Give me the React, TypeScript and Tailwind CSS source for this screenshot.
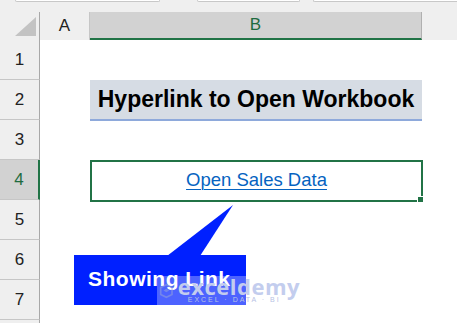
import React from "react";

const rows = [1, 2, 3, 4, 5, 6, 7, 8];

function RowHeader({ n }: { n: number }) {
  const sel = n === 4;
  return (
    <div
      className={`w-[40px] shrink-0 h-full flex items-center justify-center border-b border-[#c6c6c6] ${
        sel ? "bg-[#d2d2d2] text-[#1e6b3f] border-r-2 border-r-[#217346]" : "bg-[#efefef] text-[#222] border-r border-r-[#a8a8a8]"
      } text-[17px]`}
    >
      {n < 8 ? n : ""}
    </div>
  );
}

export default function App() {
  return (
    <div
      className="relative w-[457px] h-[323px] overflow-hidden bg-white"
      style={{ fontFamily: '"Liberation Sans", Arial, sans-serif' }}
    >
      {/* top strip */}
      <div className="h-[12px] bg-[#efefef] flex">
        <div className="ml-[15px] w-[145px] h-[2px] bg-white border-b border-x border-[#c8c8c8] rounded-b-[2px]" />
        <div className="ml-[37px] w-[103px] h-[2px] bg-white border-b border-x border-[#c8c8c8] rounded-b-[2px]" />
        <div className="ml-[13px] flex-1 h-[2px] bg-white border-b border-l border-[#c8c8c8] rounded-bl-[2px]" />
      </div>
      {/* column header */}
      <div className="h-[28px] flex bg-[#efefef]">
        <div className="w-[40px] shrink-0 h-full border-r border-[#a8a8a8] relative">
          <svg className="absolute left-0 top-0" width="40" height="28">
            <polygon points="15,24 36,24 36,5" fill="#c3c3c3" />
          </svg>
        </div>
        <div className="w-[50px] shrink-0 h-full flex items-center justify-center text-[17px] text-[#222] border-r border-[#c6c6c6]">
          A
        </div>
        <div className="w-[332px] shrink-0 h-full flex items-center justify-center text-[17px] text-[#1e6b3f] bg-[#d2d2d2] border-b-2 border-[#217346] border-r border-r-[#b0b0b0]">
          B
        </div>
        <div className="flex-1 h-full" />
      </div>
      {/* rows */}
      {rows.map((n) => (
        <div key={n} className="h-[40px] flex">
          <RowHeader n={n} />
          <div className="w-[50px] shrink-0" />
          <div className="w-[332px] shrink-0 relative">
            {n === 2 && (
              <div className="h-[41px] bg-[#d6dce4] border-b-2 border-[#8ea9db] flex items-center justify-center font-bold text-[23px] text-black pb-[1px] relative z-10">
                Hyperlink to Open Workbook
              </div>
            )}
            {n === 4 && (
              <div className="absolute left-0 top-0 w-[333px] h-[42px] border-2 border-[#217346] flex items-center justify-center">
                <a
                  href="#"
                  className="text-[18.5px] text-[#0563c1] underline underline-offset-[3px] decoration-1 pb-[2px]"
                >
                  Open Sales Data
                </a>
                <div className="absolute right-[-3px] bottom-[-3px] w-[7px] h-[7px] bg-[#217346] border border-white" />
              </div>
            )}
          </div>
          <div className="flex-1" />
        </div>
      ))}

      {/* callout */}
      <svg className="absolute left-0 top-0 pointer-events-none" width="457" height="323">
        <polygon points="233,205 167,256 200,256" fill="#0020ff" />
      </svg>
      <div className="absolute left-[74px] top-[255px] w-[172px] h-[50px] bg-[#0020ff] flex items-center pl-[14px]">
        <span className="text-white font-bold text-[21px] tracking-[0.5px] pb-[2px]">Showing Link</span>
      </div>

      {/* watermark */}
      <div className="absolute left-[157px] top-[276px] w-[143px] h-[29px] bg-white/30 flex items-start">
        <svg width="26" height="26" viewBox="0 0 26 26" className="mt-[2px] ml-[2px] opacity-50">
          <polygon points="13,2 23,7 23,19 13,24 3,19 3,7" fill="none" stroke="#9aa8d8" strokeWidth="3" />
          <polygon points="13,9 18,12 13,15 8,12" fill="#9aa8d8" />
        </svg>
        <div className="flex flex-col items-start ml-[4px] leading-none">
          <span className="text-[22px] text-[#c3cdee] font-bold tracking-[0.5px] leading-[20px]" style={{ fontFamily: '"Open Sans", sans-serif' }}>
            exceldemy
          </span>
          <span className="text-[7px] text-[#b8c2e4] tracking-[2px] ml-[10px] mt-[0px]">EXCEL · DATA · BI</span>
        </div>
      </div>
    </div>
  );
}
